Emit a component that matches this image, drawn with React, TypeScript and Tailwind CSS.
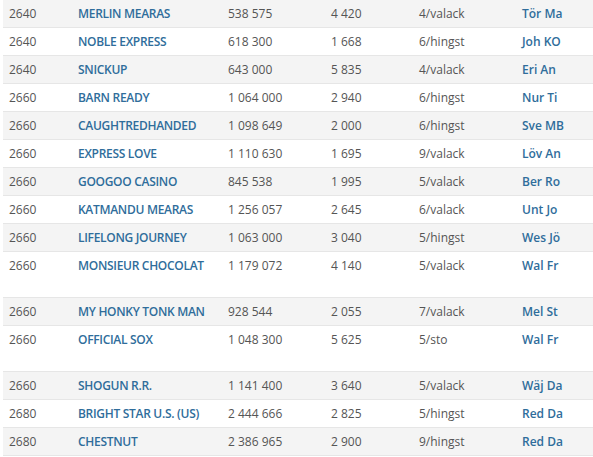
import React from "react";

type Row = {
  dist: string;
  name: string;
  money: string;
  points: string;
  info: string;
  driver: string;
  tall?: boolean;
};

const ROWS: Row[] = [
  { dist: "2640", name: "MERLIN MEARAS", money: "538 575", points: "4 420", info: "4/valack", driver: "Tör Ma" },
  { dist: "2640", name: "NOBLE EXPRESS", money: "618 300", points: "1 668", info: "6/hingst", driver: "Joh KO" },
  { dist: "2640", name: "SNICKUP", money: "643 000", points: "5 835", info: "4/valack", driver: "Eri An" },
  { dist: "2660", name: "BARN READY", money: "1 064 000", points: "2 940", info: "6/hingst", driver: "Nur Ti" },
  { dist: "2660", name: "CAUGHTREDHANDED", money: "1 098 649", points: "2 000", info: "6/hingst", driver: "Sve MB" },
  { dist: "2660", name: "EXPRESS LOVE", money: "1 110 630", points: "1 695", info: "9/valack", driver: "Löv An" },
  { dist: "2660", name: "GOOGOO CASINO", money: "845 538", points: "1 995", info: "5/valack", driver: "Ber Ro" },
  { dist: "2660", name: "KATMANDU MEARAS", money: "1 256 057", points: "2 645", info: "6/valack", driver: "Unt Jo" },
  { dist: "2660", name: "LIFELONG JOURNEY", money: "1 063 000", points: "3 040", info: "5/hingst", driver: "Wes Jö" },
  { dist: "2660", name: "MONSIEUR CHOCOLAT", money: "1 179 072", points: "4 140", info: "5/valack", driver: "Wal Fr", tall: true },
  { dist: "2660", name: "MY HONKY TONK MAN", money: "928 544", points: "2 055", info: "7/valack", driver: "Mel St" },
  { dist: "2660", name: "OFFICIAL SOX", money: "1 048 300", points: "5 625", info: "5/sto", driver: "Wal Fr", tall: true },
  { dist: "2660", name: "SHOGUN R.R.", money: "1 141 400", points: "3 640", info: "5/valack", driver: "Wäj Da" },
  { dist: "2680", name: "BRIGHT STAR U.S. (US)", money: "2 444 666", points: "2 825", info: "5/hingst", driver: "Red Da" },
  { dist: "2680", name: "CHESTNUT", money: "2 386 965", points: "2 900", info: "9/hingst", driver: "Red Da" },
];

export default function App() {
  return (
    <div className="w-[593px] h-[457px] overflow-hidden bg-white pl-[3px] font-['Open_Sans',sans-serif] text-[12px] text-[#555555]">
      {ROWS.map((row, index) => (
        <div
          key={index}
          className={`grid grid-cols-[69px_150px_103px_88px_103px_1fr] border-b border-[#e6e6e6] leading-[27px] ${
            row.tall ? "h-[46px]" : "h-[28px]"
          } ${index % 2 === 0 ? "bg-[#f4f4f4]" : "bg-white"}`}
        >
          <div className="pl-[6px]">{row.dist}</div>
          <div className="pl-[6px] font-semibold tracking-[-0.3px] text-[#2f6d9b] whitespace-nowrap">{row.name}</div>
          <div className="pl-[6px]">{row.money}</div>
          <div className="pl-[6px]">{row.points}</div>
          <div className="pl-[6px]">{row.info}</div>
          <div className="pl-[6px] font-semibold text-[#2f6d9b]">{row.driver}</div>
        </div>
      ))}
    </div>
  );
}
